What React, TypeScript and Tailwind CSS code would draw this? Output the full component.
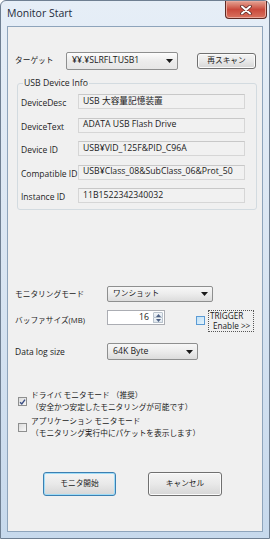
import React from 'react';

const Arrow: React.FC = () => (
  <svg width="7" height="4" viewBox="0 0 7 4" className="shrink-0">
    <path d="M0 0h7L3.5 4z" fill="#1a1a1a" />
  </svg>
);

const Combo: React.FC<{ text: string; className: string; jp?: boolean }> = ({ text, className, jp }) => (
  <div
    className={`flex items-center justify-between pl-[5px] pr-[4px] border border-[#8e8f8f] rounded-[2px] bg-linear-to-b from-[#f7f7f7] via-[#ececec] to-[#dcdcdc] ${className}`}
  >
    <span className={jp ? 'text-[7.7px]' : 'text-[8.7px]'}>{text}</span>
    <Arrow />
  </div>
);

const Field: React.FC<{ label: string; value: string }> = ({ label, value }) => (
  <div className="flex items-center h-[15px]">
    <span className="w-[60px] pl-[3px] mt-[4px] text-[8.5px] text-[#1e1e1e] whitespace-nowrap">{label}</span>
    <div className="w-[167px] h-[15px] flex items-center pl-[4px] border border-[#d6d6d6] border-t-[#c8c8c8] bg-[#f1f1f1] text-[8.7px] whitespace-nowrap overflow-hidden">
      {value}
    </div>
  </div>
);

const CheckBox: React.FC<{ checked?: boolean }> = ({ checked }) => (
  <div className="w-[9px] h-[9px] shrink-0 border border-[#8e8f8f] bg-linear-to-br from-[#dcdcdc] to-[#f8f8f8] flex items-center justify-center">
    {checked && (
      <svg width="8" height="8" viewBox="0 0 8 8">
        <path d="M1.2 4.2 3.2 6.3 6.9 1.2" fill="none" stroke="#3b4f85" strokeWidth="1.6" />
      </svg>
    )}
  </div>
);

const Button: React.FC<{ children: React.ReactNode; className: string; isDefault?: boolean }> = ({ children, className, isDefault }) => (
  <div
    className={`flex items-center justify-center rounded-[3px] border bg-linear-to-b from-[#f4f4f4] via-[#e9e9e9] to-[#d6d6d6] text-[7.7px] ${
      isDefault ? 'border-[#3c7fb1] shadow-[inset_0_0_0_1px_#9fdcf7]' : 'border-[#707070] shadow-[inset_0_0_0_1px_#fbfbfb]'
    } ${className}`}
  >
    {children}
  </div>
);

const App: React.FC = () => {
  return (
    <div className="w-[270px] h-[539px] bg-white font-['Open_Sans','Noto_Sans_CJK_JP',sans-serif] text-[#1a1a1a]">
      <div className="w-[270px] h-[539px] flex flex-col rounded-t-[6px] border border-[#6f7f92] bg-linear-to-b from-[#e6eef7] via-[#d9e5f2] to-[#c7d9ec]">
        {/* Title bar */}
        <div className="h-[25px] flex items-start shrink-0">
          <span className="pl-[6px] pt-[5px] text-[10.5px] text-[#1e2b3b]">Monitor Start</span>
          <div className="ml-auto mr-[2px] w-[42px] h-[18px] rounded-b-[4px] border border-t-0 border-[#5e2a24] bg-linear-to-b from-[#e3a394] via-[#c9493c] to-[#d9725f] shadow-[inset_0_0_0_1px_#e9a79b] flex items-center justify-center">
            <svg width="12" height="10" viewBox="0 0 12 10">
              <path d="M2 1.5 10 8.5M10 1.5 2 8.5" stroke="#5a2a26" strokeWidth="3.6" strokeLinecap="round" />
              <path d="M2 1.5 10 8.5M10 1.5 2 8.5" stroke="#ffffff" strokeWidth="2" strokeLinecap="round" />
            </svg>
          </div>
        </div>

        {/* Client area */}
        <div className="ml-[6px] w-[256px] h-[506px] border border-[#8ea4bb] bg-[#f0f0f0] flex flex-col">
          {/* Target row */}
          <div className="mt-[25px] h-[18px] flex items-center">
            <span className="pl-[7px] w-[58px] text-[7.7px]">ターゲット</span>
            <Combo text="¥¥.¥SLRFLTUSB1" className="w-[112px] h-[18px] from-[#fdfdfd] to-[#e6e6e6]" />
            <Button className="ml-[19px] w-[59px] h-[16px]">再スキャン</Button>
          </div>

          {/* USB Device Info group */}
          <div className="relative mt-[13px] ml-[9px] w-[240px] h-[127px] rounded-[3px] border border-[#d3dbe0] pt-[10px] flex flex-col gap-[8.5px]">
            <span className="absolute left-[5px] -top-[7px] px-[1px] bg-[#f0f0f0] text-[8.7px] text-[#1e1e1e]">USB Device Info</span>
            <Field label="DeviceDesc" value="USB 大容量記憶装置" />
            <Field label="DeviceText" value="ADATA USB Flash Drive" />
            <Field label="Device ID" value="USB¥VID_125F&PID_C96A" />
            <Field label="Compatible ID" value="USB¥Class_08&SubClass_06&Prot_50" />
            <Field label="Instance ID" value="11B1522342340032" />
          </div>

          {/* Monitoring mode */}
          <div className="mt-[76px] h-[16px] flex items-center">
            <span className="pl-[7px] w-[99px] text-[7.7px] mt-[1px]">モニタリングモード</span>
            <Combo text="ワンショット" jp className="w-[106px] h-[16px]" />
          </div>

          {/* Buffer size */}
          <div className="mt-[8px] h-[15px] flex items-center">
            <span className="pl-[7px] w-[99px] text-[7.7px] mt-[6px]">バッファサイズ(MB)</span>
            <div className="w-[58px] h-[15px] flex border border-[#abadb3] bg-white">
              <span className="flex-1 text-right pr-[4px] text-[8.7px] leading-[13px]">16</span>
              <div className="w-[10px] flex flex-col my-[1px] mr-[1px]">
                <div className="flex-1 flex items-center justify-center border border-[#b9c3cd] rounded-t-[1px] bg-linear-to-b from-[#f3f6f9] to-[#dfe7ef]">
                  <svg width="5" height="3" viewBox="0 0 5 3"><path d="M0 3h5L2.5 0z" fill="#4d6185" /></svg>
                </div>
                <div className="flex-1 flex items-center justify-center border border-t-0 border-[#b9c3cd] rounded-b-[1px] bg-linear-to-b from-[#f3f6f9] to-[#dfe7ef]">
                  <svg width="5" height="3" viewBox="0 0 5 3"><path d="M0 0h5L2.5 3z" fill="#4d6185" /></svg>
                </div>
              </div>
            </div>
            <div className="ml-[31px] mt-[6px] flex items-center gap-[3px]">
              <div className="w-[9px] h-[9px] shrink-0 border border-[#5b9bd5] bg-linear-to-br from-[#bfe0f6] to-[#e4f3fc]" />
              <div className="w-[46px] border border-dotted border-[#555] pl-[1px] text-[8.2px] leading-[10px] whitespace-nowrap">
                <div>TRIGGER</div>
                <div className="pl-[3px]">Enable &gt;&gt;</div>
              </div>
            </div>
          </div>

          {/* Data log size */}
          <div className="mt-[18px] h-[17px] flex items-center">
            <span className="pl-[7px] w-[99px] text-[8.5px] mt-[2px]">Data log size</span>
            <Combo text="64K Byte" className="w-[91px] h-[17px]" />
          </div>

          {/* Monitor mode checkboxes */}
          <div className="mt-[30px] ml-[10px] flex items-center gap-[4px]">
            <CheckBox checked />
            <div className="text-[7.7px] leading-[11.5px] whitespace-nowrap">
              ドライバ モニタモード （推奨）
              <br />
              （安全かつ安定したモニタリングが可能です）
            </div>
          </div>
          <div className="mt-[3px] ml-[10px] flex items-center gap-[4px]">
            <CheckBox />
            <div className="text-[7.7px] leading-[11.5px] whitespace-nowrap">
              アプリケーション モニタモード
              <br />
              （モニタリング実行中にパケットを表示します）
            </div>
          </div>

          {/* Buttons */}
          <div className="mt-[33px] ml-[35px] flex gap-[32px]">
            <Button isDefault className="w-[73px] h-[24px]">モニタ開始</Button>
            <Button className="w-[74px] h-[24px]">キャンセル</Button>
          </div>
        </div>
      </div>
    </div>
  );
};

export default App;
